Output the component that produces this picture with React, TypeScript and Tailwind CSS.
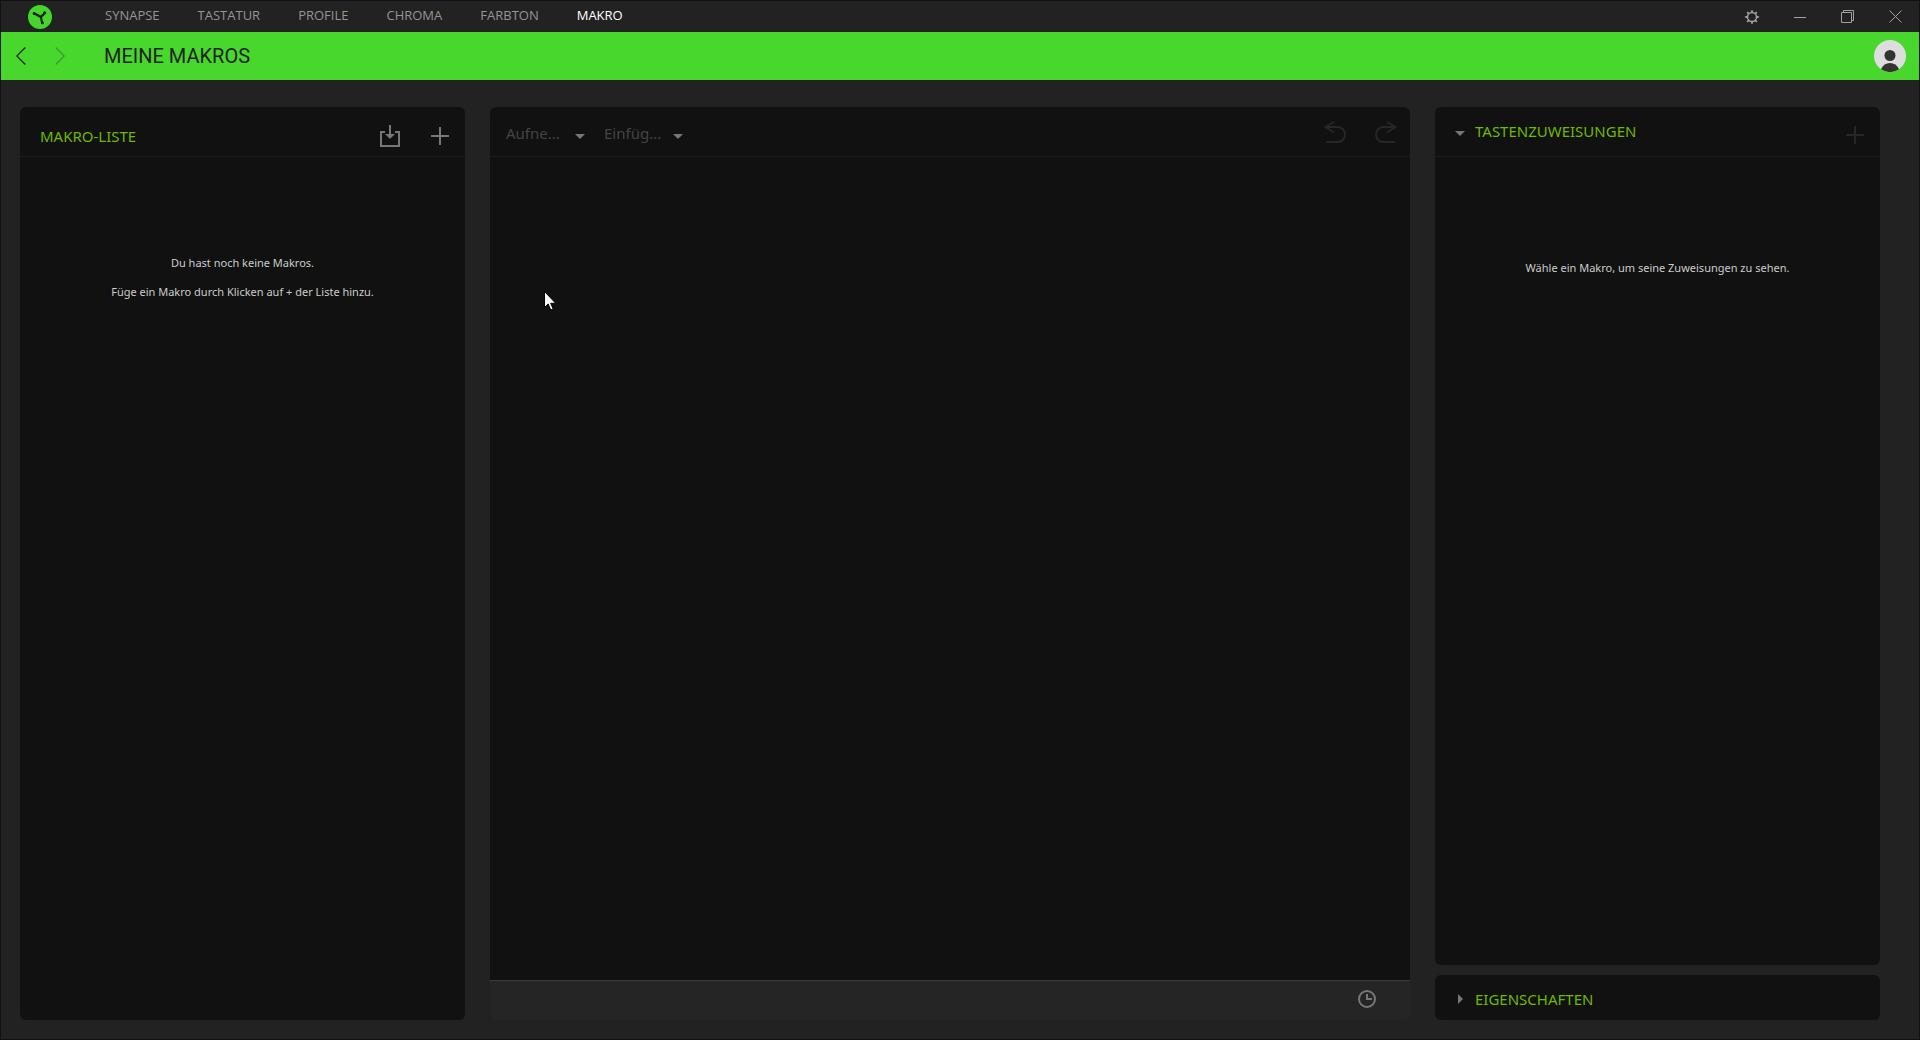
import { useState } from 'react';
import type { ReactNode } from 'react';
import clsx from 'clsx';

const TABS = ['SYNAPSE', 'TASTATUR', 'PROFILE', 'CHROMA', 'FARBTON', 'MAKRO'];

const MENUS = [
  { id: 'record', label: 'Aufne...', name: 'Aufnehmen' },
  { id: 'insert', label: 'Einfüg...', name: 'Einfügen' },
];

function Logo() {
  return (
    <svg width="24" height="24" viewBox="0 0 24 24" className="block">
      <circle cx="12" cy="12" r="12" fill="#44d62c" />
      <path d="M6.200 8.600C9 9.200 10.500 11 12.600 11.800C14.500 11 15.600 9.800 16.600 7.800M12.800 11.800C13.600 13.600 13.200 15.400 14.300 17.800" stroke="#0f1f0a" strokeWidth="2.200" strokeLinecap="round" strokeLinejoin="round" fill="none" />
      <circle cx="6.200" cy="8.600" r="1.500" fill="#0f1f0a" />
      <circle cx="16.700" cy="7.700" r="1.500" fill="#0f1f0a" />
      <circle cx="14.300" cy="17.800" r="1.500" fill="#0f1f0a" />
    </svg>
  );
}

function GearIcon() {
  return (
    <svg width="14" height="14" viewBox="0 0 14 14" fill="none" stroke="#a0a0a0">
      <circle cx="7" cy="7" r="4.500" strokeWidth="1.500" />
      <path strokeWidth="1.800" d="M7 .2v2.400M7 11.400v2.400M.2 7h2.400M11.400 7h2.400M2.200 2.200l1.500 1.500M10.300 10.300l1.500 1.500M2.200 11.800l1.500-1.500M10.300 3.700l1.500-1.500" />
    </svg>
  );
}

function PlusIcon() {
  return (
    <svg width="18" height="18" viewBox="0 0 18 18" fill="none" stroke="currentColor" strokeWidth="2">
      <path d="M9 0v18M0 9h18" />
    </svg>
  );
}

function ImportIcon() {
  return (
    <svg width="20" height="22" viewBox="0 0 20 22" fill="none" stroke="currentColor" strokeWidth="2">
      <path d="M5 7H1v14h18V7h-4M10 0v10" />
      <path d="M5 9h10l-5 5z" fill="currentColor" stroke="none" />
    </svg>
  );
}

function UndoIcon({ flip }: { flip?: boolean }) {
  return (
    <svg width="22" height="22" viewBox="0 0 22 22" fill="none" stroke="currentColor" strokeWidth="2" className={clsx(flip && '-scale-x-100')}>
      <path d="M1 6h13a7 7.500 0 0 1 0 15H2M10 1L1.500 6l8.500 5.500" />
    </svg>
  );
}

function Caret({ right }: { right?: boolean }) {
  return right ? (
    <svg width="10" height="10" viewBox="0 0 10 10" fill="#777"><path d="M3 0l5 5-5 5z" /></svg>
  ) : (
    <svg width="10" height="10" viewBox="0 0 10 10" fill="#777"><path d="M0 3h10L5 8z" /></svg>
  );
}

function PanelHeader({ children, className }: { children: ReactNode; className?: string }) {
  return (
    <div className={clsx('flex h-[50px] shrink-0 items-center border-b border-[#1d1d1d]', className)}>
      {children}
    </div>
  );
}

export default function App() {
  const [tab, setTab] = useState('MAKRO');
  const [showKeys, setShowKeys] = useState(true);
  const [showProps, setShowProps] = useState(false);

  return (
    <div className="relative flex min-h-screen flex-col border border-[#111] bg-[#222] font-['Noto_Sans','Open_Sans',sans-serif] text-[#ccc]">
      <header className="flex h-[31px] shrink-0 items-center pr-[17px] pl-[27px]">
        <Logo />
        <nav className="ml-[53px] flex gap-[38px] pb-1 font-['Open_Sans','Noto_Sans',sans-serif]">
          {TABS.map(t => (
            <button key={t} onClick={() => setTab(t)} className={clsx('text-[13px] leading-4', t === tab ? 'font-medium text-white' : 'text-[#959595]')}>
              {t}
            </button>
          ))}
        </nav>
        <div className="ml-auto flex items-center gap-[35px] text-[#a0a0a0]">
          <button aria-label="Einstellungen"><GearIcon /></button>
          <button aria-label="Minimieren">
            <svg width="12" height="13" viewBox="0 0 12 13"><path d="M0 7.500h12" stroke="currentColor" /></svg>
          </button>
          <button aria-label="Wiederherstellen">
            <svg width="13" height="13" viewBox="0 0 13 13" fill="none" stroke="currentColor">
              <path d="M.5 2.500h10v10H.5zM2.500 2.500v-2h10v10h-2" />
            </svg>
          </button>
          <button aria-label="Schließen">
            <svg width="13" height="13" viewBox="0 0 13 13"><path d="M.5.5l12 12M12.500.5l-12 12" stroke="currentColor" /></svg>
          </button>
        </div>
      </header>

      <div className="flex h-12 shrink-0 items-center bg-[#47d72d] pr-[13px] pl-[15px] text-[#222]">
        <button aria-label="Zurück">
          <svg width="10" height="18" viewBox="0 0 10 18" fill="none" stroke="currentColor" strokeWidth="1.200"><path d="M9.300.5L.8 9l8.500 8.500" /></svg>
        </button>
        <button aria-label="Vorwärts" disabled className="ml-[29px] opacity-35">
          <svg width="10" height="18" viewBox="0 0 10 18" fill="none" stroke="currentColor" strokeWidth="1.200"><path d="M.7.5L9.200 9 .7 17.500" /></svg>
        </button>
        <h1 className="ml-[39px] font-['Roboto','Open_Sans',sans-serif] text-[20px] leading-6">MEINE MAKROS</h1>
        <button aria-label="Profil" className="ml-auto">
          <svg width="32" height="32" viewBox="0 0 32 32">
            <circle cx="16" cy="16" r="16" fill="#ddd" />
            <circle cx="16" cy="15.500" r="5.500" fill="#333" />
            <path d="M7 29.300C9 25 12 23 16 23s7 2 9 6.300A16 16 0 0 1 7 29.300z" fill="#333" />
          </svg>
        </button>
      </div>

      <main className="flex grow gap-[25px] pt-[27px] pr-[39px] pb-[19px] pl-[19px]">
        <section className="flex w-[445px] shrink-0 flex-col rounded-md bg-[#111]">
          <PanelHeader className="pt-2 pr-4 pl-5">
            <h2 className="grow text-[15px] leading-5 text-[#6fb800]">MAKRO-LISTE</h2>
            <div className="flex items-center gap-[31px] text-[#777]">
              <button aria-label="Importieren"><ImportIcon /></button>
              <button aria-label="Makro hinzufügen"><PlusIcon /></button>
            </div>
          </PanelHeader>
          <div className="pt-[91px] text-center text-[11px] leading-[29px]">
            <p>Du hast noch keine Makros.</p>
            <p>Füge ein Makro durch Klicken auf + der Liste hinzu.</p>
          </div>
        </section>

        <section className="flex grow flex-col rounded-md bg-[#111]">
          <PanelHeader className="pr-[13px] pl-4">
            <div className="flex gap-[19px] pt-0.5">
              {MENUS.map(m => (
                <div key={m.id} className="relative w-[79px]">
                  <select aria-label={m.name} disabled className="block w-full appearance-none bg-transparent text-[15px] leading-5 text-[#444] opacity-100">
                    <option>{m.label}</option>
                  </select>
                  <span className="pointer-events-none absolute right-0 bottom-0.5"><Caret /></span>
                </div>
              ))}
            </div>
            <div className="ml-auto flex gap-[29px] text-[#272727]">
              <button aria-label="Rückgängig" disabled><UndoIcon /></button>
              <button aria-label="Wiederholen" disabled><UndoIcon flip /></button>
            </div>
          </PanelHeader>
          <div className="grow" />
          <footer className="flex h-10 items-center justify-end rounded-b-md border-t border-[#3a3a3a] bg-[#252525] pr-[34px] pb-1 text-[#777]">
            <button aria-label="Verzögerung">
              <svg width="18" height="18" viewBox="0 0 18 18" fill="none" stroke="currentColor" strokeWidth="2">
                <circle cx="9" cy="9" r="8" /><path d="M9 4v5h5" />
              </svg>
            </button>
          </footer>
        </section>

        <div className="flex w-[445px] shrink-0 flex-col gap-2.5">
          <section className="flex grow flex-col rounded-md bg-[#111]">
            <PanelHeader className="pr-4 pl-5">
              <h2 className="grow pb-0.5 text-[15px] leading-5 text-[#6fb800]">
                <button onClick={() => setShowKeys(!showKeys)} className="flex items-center gap-2.5">
                  <span className="pt-1"><Caret right={!showKeys} /></span> TASTENZUWEISUNGEN
                </button>
              </h2>
              <button aria-label="Zuweisung hinzufügen" disabled className="pt-1.5 text-[#272727]"><PlusIcon /></button>
            </PanelHeader>
            {showKeys && (
              <p className="pt-24 text-center text-[11px] leading-[29px]">Wähle ein Makro, um seine Zuweisungen zu sehen.</p>
            )}
          </section>
          <section className="rounded-md bg-[#111]">
            <h2 className="flex h-[45px] items-center pt-0.5 pl-5 text-[15px] leading-5 text-[#6fb800]">
              <button onClick={() => setShowProps(!showProps)} className="flex items-center gap-2.5">
                <Caret right={!showProps} /> EIGENSCHAFTEN
              </button>
            </h2>
          </section>
        </div>
      </main>

      {/* mouse pointer */}
      <svg width="13" height="20" viewBox="0 0 13 20" className="pointer-events-none absolute top-[290px] left-[543px]">
        <path d="M.5.5v16l3.700-3.500 2.500 6 2.500-1-2.500-5.700h5z" fill="#fff" stroke="#000" />
      </svg>
    </div>
  );
}
